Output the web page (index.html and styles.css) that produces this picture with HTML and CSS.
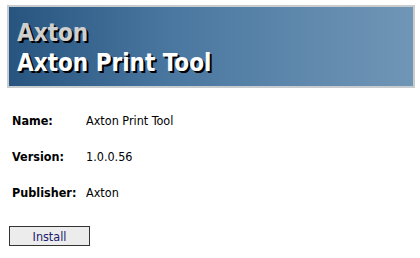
FILE: index.html
```html
<!DOCTYPE html>
<html lang="en">
<head>
<meta charset="UTF-8">
<meta name="viewport" content="width=device-width, initial-scale=1.0">
<title>Axton Print Tool</title>
<link rel="stylesheet" href="styles.css">
</head>
<body>
<div id="banner">
    <div class="inner">
        <div class="vendor">Axton</div>
        <div class="product">Axton Print Tool</div>
    </div>
</div>

<div id="info">
    <div class="label">Name:</div>
    <div class="value">Axton Print Tool</div>
    <div class="label">Version:</div>
    <div class="value">1.0.0.56</div>
    <div class="label">Publisher:</div>
    <div class="value">Axton</div>
</div>

<button type="button" class="install">Install</button>
</body>
</html>
```

FILE: styles.css
```css
body {
    font-family: "DejaVu Sans Condensed", "DejaVu Sans", sans-serif;
    font-size: 12.5px;
    background-color: #fff;
    color: #000;
    margin: 0;
    padding: 5px 5px 0 7px;
}

#banner {
    border: 2px solid #c9cccf;
    width: 404px;
}

#banner .inner {
    height: 79px;
    padding: 11px 0 0 8px;
    box-sizing: border-box;
    background: linear-gradient(to right, #27557f, #4a77a0 40%, #7096b6);
    font-weight: bold;
    font-size: 24px;
    line-height: 30px;
    text-shadow: 2px 2px 0 #000;
}

.vendor {
    color: #cfcfcf;
}

.product {
    color: #fff;
}

#info {
    display: grid;
    grid-template-columns: 74px auto;
    grid-auto-rows: 36px;
    align-items: center;
    margin-top: 14px;
    padding-left: 5px;
}

#info .label {
    font-weight: bold;
    white-space: nowrap;
}

button.install {
    margin-top: 16px;
    margin-left: 2px;
    width: 81px;
    height: 20px;
    padding: 0;
    font-family: inherit;
    font-size: 12.5px;
    color: #1a1a6e;
    background-color: #ececec;
    border: 1px solid #333;
    border-radius: 0;
}
```
